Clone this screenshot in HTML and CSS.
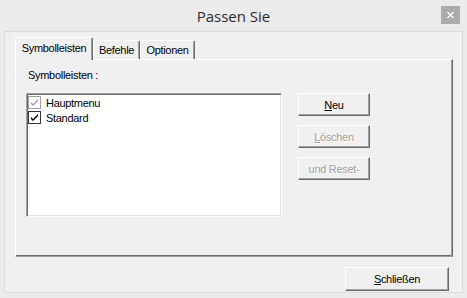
FILE: index.html
```html
<!DOCTYPE html>
<html lang="de">
<head>
<meta charset="utf-8">
<title>Passen Sie</title>
<link rel="stylesheet" href="styles.css">
</head>
<body>
<div class="window">
  <div class="titlebar">
    <span class="title">Passen Sie</span>
    <span class="close" aria-label="Schließen">
      <svg width="7" height="6" viewBox="0 0 7 6"><path d="M0 0h2v1h1v1h1V1h1V0h2v1H6v1H5v2h1v1h1v1H5V5H4V4H3v1H2v1H0V5h1V4h1V2H1V1H0z" fill="#fff"/></svg>
    </span>
  </div>
  <div class="frame">
    <div class="tabs">
      <div class="tab active">Symbolleisten</div>
      <div class="tab">Befehle</div>
      <div class="tab">Optionen</div>
    </div>
    <div class="panel">
      <div class="label">Symbolleisten :</div>
      <div class="row">
        <div class="listbox">
          <div class="item disabled">
            <span class="check"><svg width="11" height="11" viewBox="0 0 11 11"><path d="M2 5l2 2 5-5v2l-5 5-2-2z" fill="#a0a0a0"/></svg></span>
            <span>Hauptmenu</span>
          </div>
          <div class="item">
            <span class="check"><svg width="11" height="11" viewBox="0 0 11 11"><path d="M2 5l2 2 5-5v2l-5 5-2-2z" fill="#000"/></svg></span>
            <span>Standard</span>
          </div>
        </div>
        <div class="buttons">
          <button class="btn"><u>N</u>eu</button>
          <button class="btn" disabled><u>L</u>öschen</button>
          <button class="btn" disabled>und Reset-</button>
        </div>
      </div>
    </div>
    <div class="footer">
      <button class="btn wide"><u>S</u>chließen</button>
    </div>
  </div>
</div>
</body>
</html>
```

FILE: styles.css
```css
* { box-sizing: border-box; }
html, body { margin: 0; padding: 0; }
body {
  width: 467px;
  height: 298px;
  background: #ebebeb;
  font-family: "Liberation Sans", Arial, sans-serif;
  font-size: 11px;
  letter-spacing: -0.3px;
  color: #000;
  overflow: hidden;
}
.window { width: 467px; height: 298px; }
.titlebar {
  height: 31px;
  display: flex;
  align-items: flex-start;
  justify-content: center;
  position: relative;
}
.title {
  font-family: "Open Sans", "Noto Sans", sans-serif;
  font-size: 15px;
  letter-spacing: 0;
  color: #2b2b2b;
  line-height: 20px;
  margin-top: 6px;
}
.close {
  position: absolute;
  right: 7px;
  top: 6px;
  width: 19px;
  height: 18px;
  background: #ababab;
  display: flex;
  align-items: center;
  justify-content: center;
}
.frame {
  margin-left: 4px;
  width: 459px;
  height: 262px;
  border: 1px solid #dadada;
  background: #f0f0f0;
  padding: 5px 8px 0 10px;
}
.tabs {
  display: flex;
  align-items: flex-end;
  height: 22px;
  position: relative;
  z-index: 1;
}
.tab {
  height: 19px;
  padding: 2px 0 0;
  text-align: center;
  border-top: 1px solid #fff;
  border-left: 1px solid #fff;
  border-right: 1px solid #696969;
  box-shadow: inset -1px 0 0 #a0a0a0;
  border-radius: 2px 2px 0 0;
  line-height: 14px;
  background: #f0f0f0;
}
.tab:nth-child(2) { width: 47px; }
.tab:nth-child(3) { width: 55px; }
.tab.active {
  width: 78px;
  height: 23px;
  margin-bottom: -1px;
  padding-top: 3px;
}
.panel {
  width: 438px;
  height: 198px;
  border-top: 1px solid #fff;
  border-left: 1px solid #fff;
  border-right: 1px solid #696969;
  border-bottom: 1px solid #a0a0a0;
  box-shadow: inset -1px 0 0 #a0a0a0, inset 0 -1px 0 #696969;
  padding: 9px 0 0 10px;
}
.label {
  line-height: 13px;
  padding-left: 2px;
}
.row {
  display: flex;
  align-items: flex-start;
  margin-top: 11px;
}
.listbox {
  width: 256px;
  height: 124px;
  background: #fff;
  border-top: 1px solid #a0a0a0;
  border-left: 1px solid #a0a0a0;
  border-right: 1px solid #fff;
  border-bottom: 1px solid #fff;
  box-shadow: inset 1px 1px 0 #696969, inset -1px -1px 0 #e3e3e3;
  padding: 1px 0 0 1px;
}
.item {
  display: flex;
  align-items: center;
  height: 15px;
  gap: 5px;
}
.check {
  width: 13px;
  height: 13px;
  border: 1px solid #333;
  background: #fff;
  display: flex;
  align-items: center;
  justify-content: center;
}
.item.disabled .check { border-color: #a0a0a0; }
.buttons {
  display: flex;
  flex-direction: column;
  gap: 9px;
  margin-left: 16px;
}
.btn {
  width: 72px;
  height: 23px;
  padding: 0;
  margin: 0;
  font: inherit;
  letter-spacing: inherit;
  color: #000;
  background: #f0f0f0;
  border-top: 1px solid #fff;
  border-left: 1px solid #fff;
  border-right: 1px solid #696969;
  border-bottom: 1px solid #696969;
  box-shadow: inset -1px -1px 0 #a0a0a0;
  border-radius: 0;
  text-align: center;
  line-height: 20px;
}
.btn:disabled {
  color: #a0a0a0;
  text-shadow: 1px 1px 0 #fff;
}
.footer {
  display: flex;
  justify-content: flex-end;
  padding-right: 5px;
  margin-top: 10px;
}
.btn.wide {
  width: 104px;
  height: 24px;
}
```
